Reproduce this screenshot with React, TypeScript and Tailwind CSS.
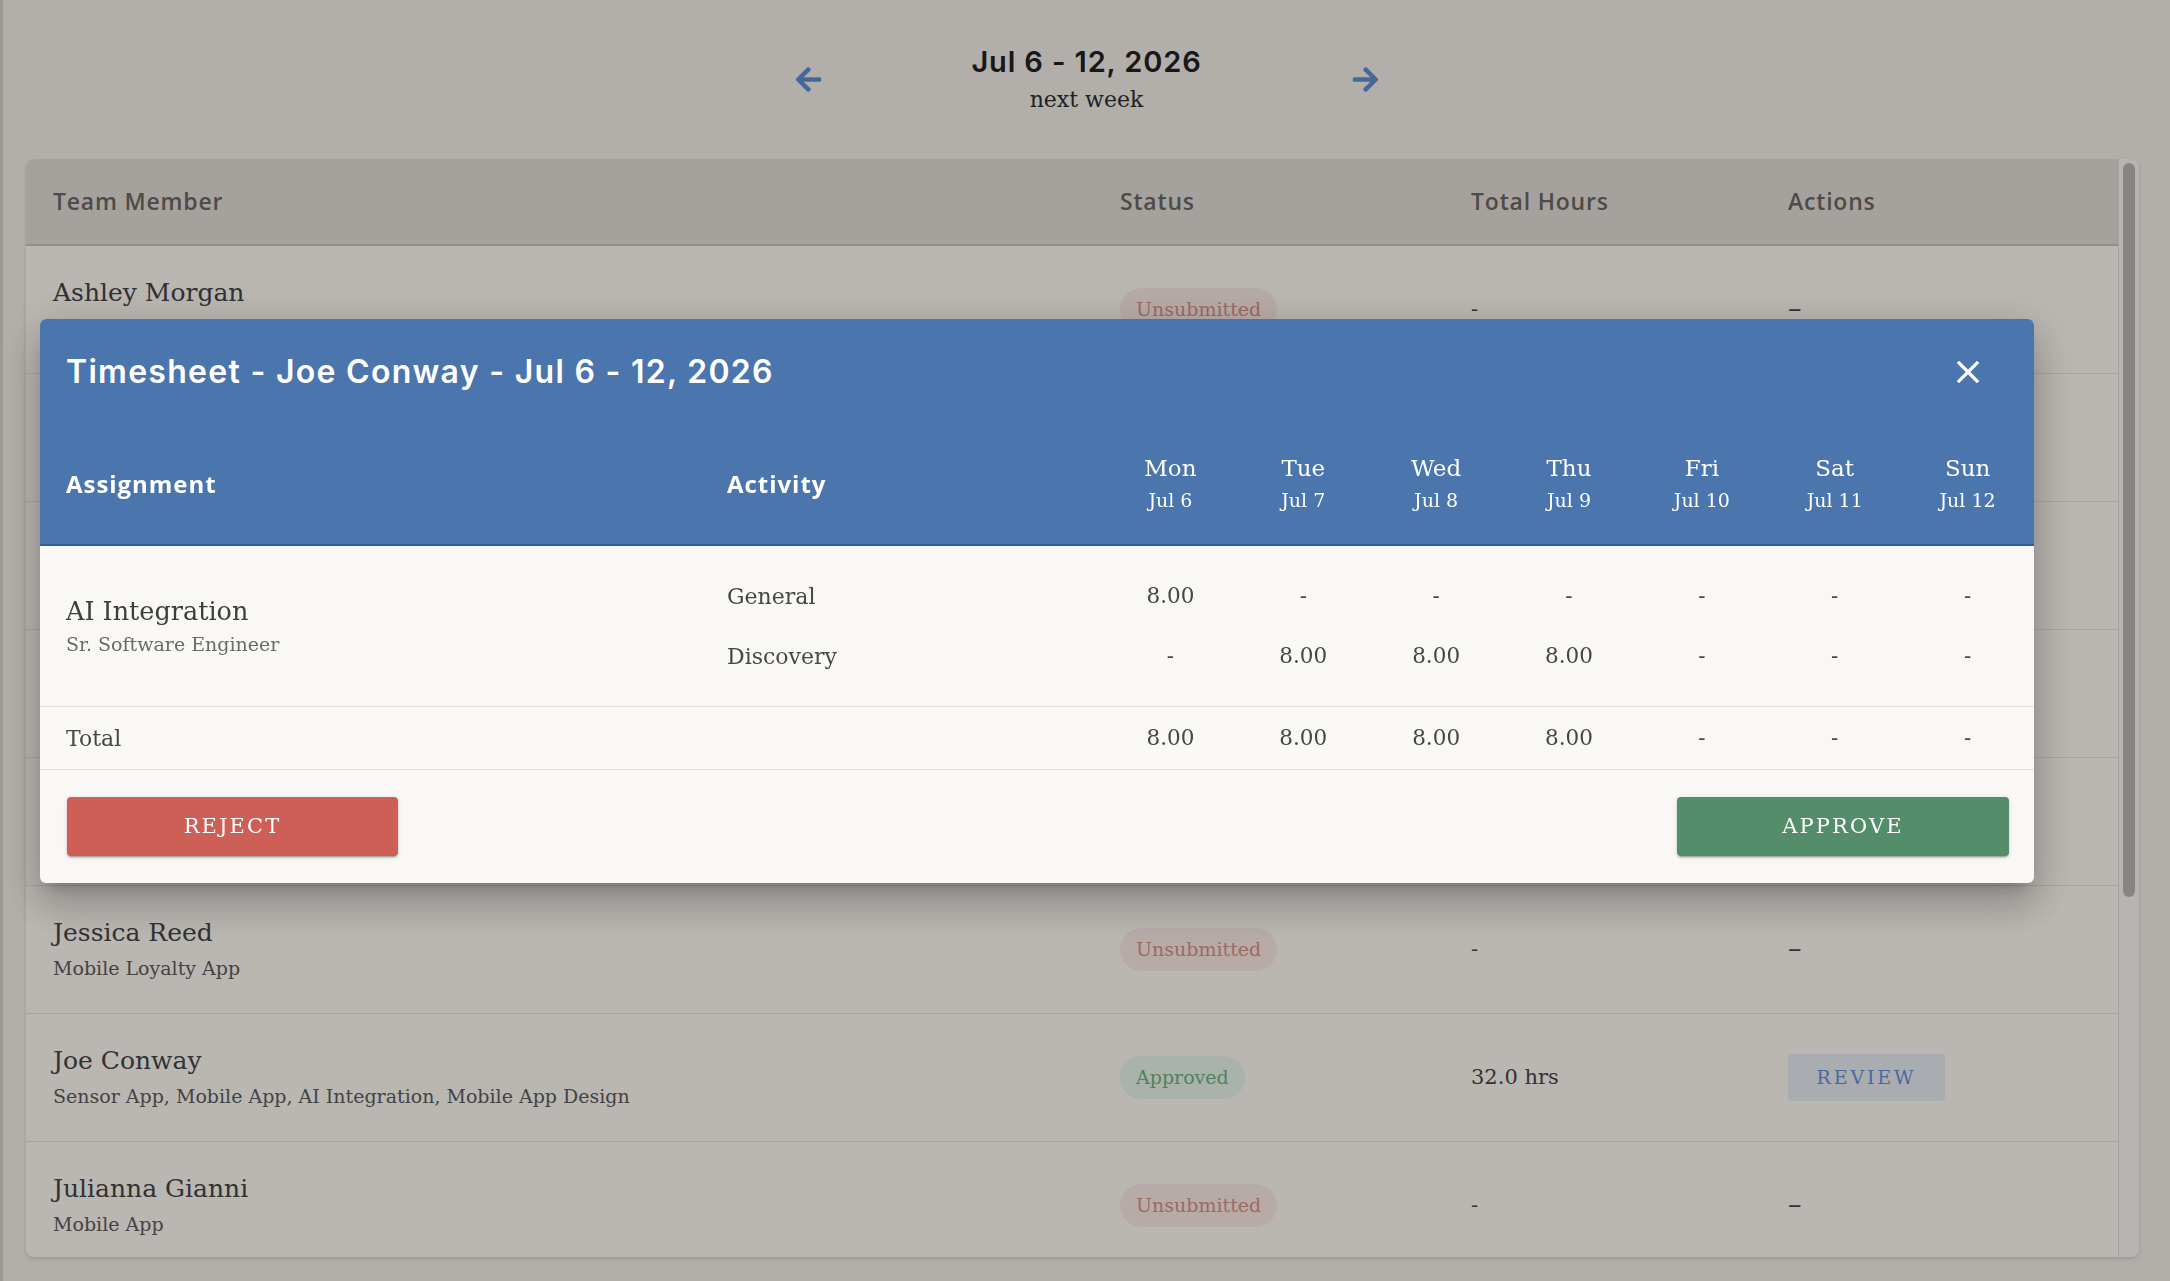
import React from 'react';
import { FaArrowLeft, FaArrowRight } from 'react-icons/fa';

type Member = {
  name: string;
  projects: string;
  status: 'Unsubmitted' | 'Approved';
  hours?: string;
};

const members: Member[] = [
  { name: 'Ashley Morgan', projects: 'Sensor App', status: 'Unsubmitted' },
  { name: 'Brandon Hughes', projects: 'Mobile App Design', status: 'Unsubmitted' },
  { name: 'Chloe Bennett', projects: 'Mobile App', status: 'Unsubmitted' },
  { name: 'Daniel Ortiz', projects: 'AI Integration', status: 'Unsubmitted' },
  { name: 'Emily Carter', projects: 'Sensor App', status: 'Unsubmitted' },
  { name: 'Jessica Reed', projects: 'Mobile Loyalty App', status: 'Unsubmitted' },
  {
    name: 'Joe Conway',
    projects: 'Sensor App, Mobile App, AI Integration, Mobile App Design',
    status: 'Approved',
    hours: '32.0 hrs',
  },
  { name: 'Julianna Gianni', projects: 'Mobile App', status: 'Unsubmitted' },
  { name: 'Kevin Brooks', projects: 'Sensor App', status: 'Unsubmitted' },
  { name: 'Maria Santos', projects: 'Mobile Loyalty App', status: 'Unsubmitted' },
  { name: 'Olivia Chen', projects: 'Mobile App Design', status: 'Unsubmitted' },
  { name: 'Ryan Patel', projects: 'AI Integration', status: 'Unsubmitted' },
];

const days = [
  ['Mon', 'Jul 6'],
  ['Tue', 'Jul 7'],
  ['Wed', 'Jul 8'],
  ['Thu', 'Jul 9'],
  ['Fri', 'Jul 10'],
  ['Sat', 'Jul 11'],
  ['Sun', 'Jul 12'],
];

const activities: { name: string; hours: (number | null)[] }[] = [
  { name: 'General', hours: [8, null, null, null, null, null, null] },
  { name: 'Discovery', hours: [null, 8, 8, 8, null, null, null] },
];

const fmt = (v: number | null) => (v ? v.toFixed(2) : '-');

/** Pastilla de estado */
function StatusPill({ status }: { status: Member['status'] }) {
  const cls =
    status === 'Approved'
      ? 'bg-[#e9f6eb] text-[#6ab482]'
      : 'bg-[#fbebe6] text-[#d9908b]';
  return (
    <span className={`inline-flex items-center h-[43px] px-[16px] rounded-full text-[19px] ${cls}`}>
      {status}
    </span>
  );
}

function CloseIcon() {
  return (
    <svg width="22" height="22" viewBox="0 0 22 22" fill="none">
      <path d="M2 2L20 20M20 2L2 20" stroke="white" strokeWidth="3.2" strokeLinecap="square" />
    </svg>
  );
}

function TimesheetModal() {
  const totals = days.map((_, i) =>
    activities.reduce((acc, a) => acc + (a.hours[i] || 0), 0)
  );

  return (
    <div className="fixed left-[40px] top-[319px] w-[1994px] rounded-[6px] overflow-hidden bg-[#f9f8f5] shadow-[0_11px_15px_-7px_rgba(0,0,0,0.2),0_24px_38px_3px_rgba(0,0,0,0.14),0_9px_46px_8px_rgba(0,0,0,0.12)]">
      {/* Cabecera azul */}
      <div className="bg-[#4b75ad] border-b-2 border-[#2f5e9c] pb-[30px]">
        <div className="flex items-center justify-between pl-[26px] pr-[55px] pt-[33px] h-[73px]">
          <h2 className="font-['Inter',sans-serif] font-semibold text-[32px] leading-[40px] tracking-[0.04em] text-white">
            Timesheet - Joe Conway - Jul 6 - 12, 2026
          </h2>
          <CloseIcon />
        </div>
        <div className="mt-[61px] pl-[26px] grid grid-cols-[661px_377px_repeat(7,1fr)] items-center text-white">
          <div className="font-['Open_Sans',sans-serif] font-bold text-[24px] tracking-[0.04em]">
            Assignment
          </div>
          <div className="font-['Open_Sans',sans-serif] font-bold text-[24px] tracking-[0.04em]">
            Activity
          </div>
          {days.map(([d, dt]) => (
            <div key={d} className="flex flex-col items-center font-['DejaVu_Serif',serif]">
              <span className="text-[23px] leading-[30px]">{d}</span>
              <span className="text-[19px] leading-[28px] mt-[3px]">{dt}</span>
            </div>
          ))}
        </div>
      </div>

      {/* Cuerpo */}
      <div className="font-['DejaVu_Serif',serif] text-[#474747]">
        <div className="pl-[26px] py-[20px] grid grid-cols-[661px_377px_repeat(7,1fr)] border-b border-[#e3e1dd]">
          <div className="row-span-2 flex flex-col justify-center">
            <span className="text-[25.5px] leading-[32px] text-[#3d3d3d]">AI Integration</span>
            <span className="text-[19px] leading-[28px] mt-[3px] text-[#6a6a6a]">
              Sr. Software Engineer
            </span>
          </div>
          {activities.map((a) => (
            <React.Fragment key={a.name}>
              <div className="h-[60px] flex items-center text-[22px]">{a.name}</div>
              {a.hours.map((h, i) => (
                <div key={i} className="h-[60px] flex items-center justify-center text-[21.5px]">
                  {fmt(h)}
                </div>
              ))}
            </React.Fragment>
          ))}
        </div>

        <div className="pl-[26px] h-[63px] grid grid-cols-[661px_377px_repeat(7,1fr)] items-center border-b border-[#e3e1dd]">
          <div className="text-[22px]">Total</div>
          <div />
          {totals.map((t, i) => (
            <div key={i} className="text-center text-[21.5px]">
              {fmt(t)}
            </div>
          ))}
        </div>

        <div className="flex justify-between pl-[27px] pr-[25px] pt-[27px] pb-[27px]">
          <button className="w-[331px] h-[59px] rounded-[4px] bg-[#cd5f56] text-white text-[21px] tracking-[0.1em] shadow-[0_3px_1px_-2px_rgba(0,0,0,0.2),0_2px_2px_0_rgba(0,0,0,0.14),0_1px_5px_0_rgba(0,0,0,0.12)]">
            REJECT
          </button>
          <button className="w-[332px] h-[59px] rounded-[4px] bg-[#538d69] text-white text-[21px] tracking-[0.1em] shadow-[0_3px_1px_-2px_rgba(0,0,0,0.2),0_2px_2px_0_rgba(0,0,0,0.14),0_1px_5px_0_rgba(0,0,0,0.12)]">
            APPROVE
          </button>
        </div>
      </div>
    </div>
  );
}

export default function App() {
  return (
    <div className="h-[1281px] overflow-hidden bg-[#f5f0e9] border-l-[3px] border-[#d8d4ce]">
      {/* Navegación de semana */}
      <div className="h-[159px] flex items-center justify-center gap-[64px]">
        <FaArrowLeft className="text-[#5f8fd3] w-[29px] h-[29px]" />
        <div className="w-[400px] flex flex-col items-center">
          <span className="font-['Inter',sans-serif] font-semibold text-[29px] leading-[34px] tracking-[0.03em] text-[#222]">
            Jul 6 - 12, 2026
          </span>
          <span className="font-['DejaVu_Serif',serif] text-[22px] leading-[30px] mt-[6px] text-[#2e2e2e]">
            next week
          </span>
        </div>
        <FaArrowRight className="text-[#5f8fd3] w-[29px] h-[29px]" />
      </div>

      {/* Tabla del equipo */}
      <div className="ml-[23px] mr-[31px] h-[1098px] rounded-lg bg-[#fffbf5] shadow-[0_2px_4px_rgba(0,0,0,0.12)] overflow-hidden flex">
        <div className="flex-1 overflow-hidden">
          <div className="h-[87px] grid grid-cols-[1067px_351px_317px_1fr] items-center px-[27px] bg-[#e3dfd8] border-b-2 border-[#c9c5bf] font-['Open_Sans',sans-serif] font-semibold text-[23px] tracking-[0.035em] text-[#6b6763]">
            <div>Team Member</div>
            <div>Status</div>
            <div>Total Hours</div>
            <div>Actions</div>
          </div>
          {members.map((m) => (
            <div
              key={m.name}
              className="h-[128px] grid grid-cols-[1067px_351px_317px_1fr] items-center px-[27px] border-b border-[#e6e2dd] font-['DejaVu_Serif',serif]"
            >
              <div className="flex flex-col">
                <span className="text-[25px] leading-[32px] text-[#454545]">{m.name}</span>
                <span className="text-[19px] leading-[28px] mt-[5px] text-[#5c5c5c]">{m.projects}</span>
              </div>
              <div>
                <StatusPill status={m.status} />
              </div>
              <div className="text-[21px] text-[#464646]">{m.hours ?? '-'}</div>
              <div>
                {m.status === 'Approved' ? (
                  <button className="h-[47px] w-[157px] rounded-[4px] bg-[#e8ecf3] text-[#6593d6] text-[19px] tracking-[0.15em]">
                    REVIEW
                  </button>
                ) : (
                  <span className="text-[27px] text-[#464646]">–</span>
                )}
              </div>
            </div>
          ))}
        </div>
        {/* Barra de desplazamiento */}
        <div className="w-[21px] shrink-0 bg-[#fbf8f3] border-l border-[#e2ded8] pt-[4px] px-[4px]">
          <div className="h-[734px] rounded-full bg-[#bab7b4]" />
        </div>
      </div>

      {/* Fondo oscurecido + diálogo */}
      <div className="fixed inset-0 bg-black/[0.27]" />
      <TimesheetModal />
    </div>
  );
}
